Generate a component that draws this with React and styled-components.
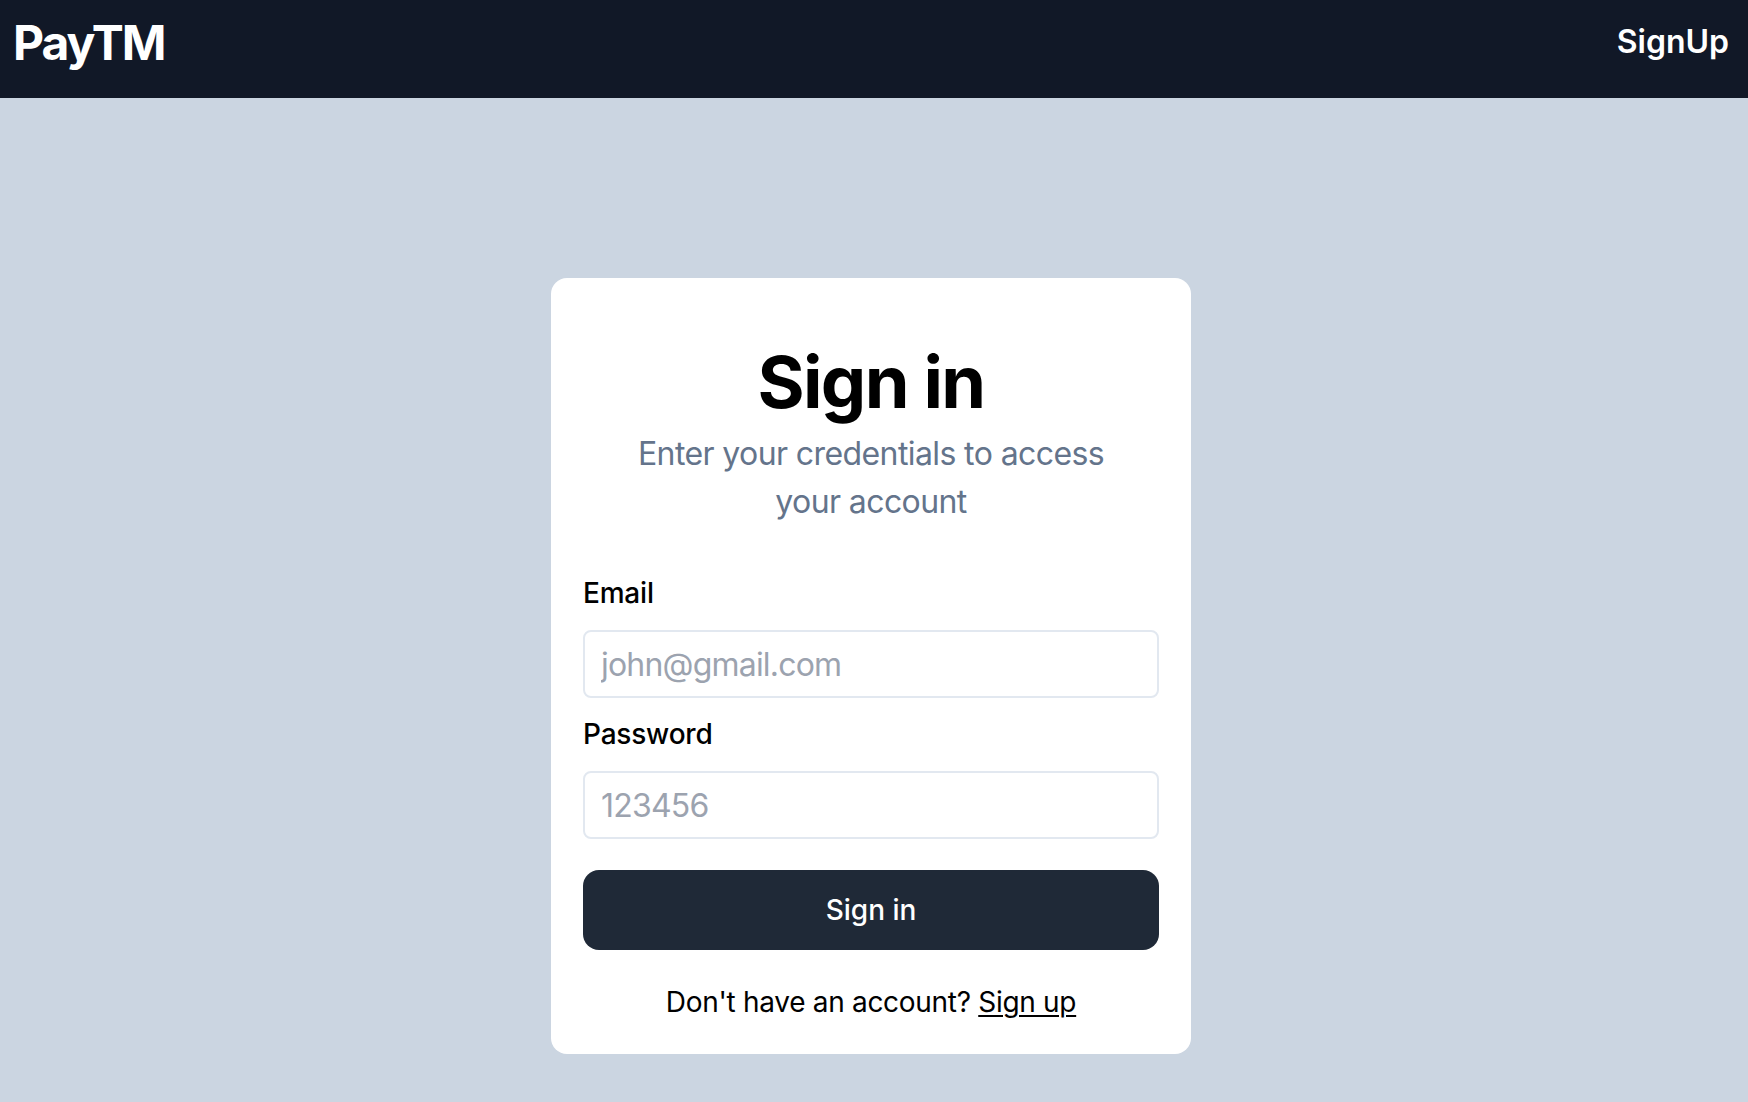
import React from "react";
import styled, { createGlobalStyle } from "styled-components";

const Global = createGlobalStyle`
  * { box-sizing: border-box; }
  html, body { margin: 0; padding: 0; }
  body {
    background: #cbd5e1;
    font-family: Inter, "Noto Sans", "Liberation Sans", sans-serif;
    min-height: 100vh;
  }
`;

const Nav = styled.header`
  height: 98px;
  background: #111827;
  display: flex;
  justify-content: space-between;
  align-items: flex-start;
  padding: 0 19px 0 13px;
  color: #ffffff;
`;

const Logo = styled.div`
  font-size: 48px;
  line-height: 48px;
  font-weight: 700;
  margin-top: 19px;
  letter-spacing: -2px;
`;

const NavLink = styled.a`
  font-size: 32px;
  line-height: 32px;
  font-weight: 600;
  margin-top: 26px;
  color: #ffffff;
  text-decoration: none;
  cursor: pointer;
`;

const Main = styled.main`
  display: flex;
  justify-content: center;
  padding-right: 6px;
`;

const Card = styled.div`
  width: 640px;
  margin-top: 180px;
  background: #ffffff;
  border-radius: 16px;
  padding: 64px 32px 32px;
  display: flex;
  flex-direction: column;
`;

const Heading = styled.h1`
  margin: 0;
  font-size: 72px;
  line-height: 80px;
  font-weight: 700;
  text-align: center;
  letter-spacing: -1.6px;
  color: #000000;
`;

const Subtitle = styled.p`
  margin: 8px 0 0;
  padding: 0 32px;
  font-size: 32px;
  line-height: 48px;
  letter-spacing: -0.6px;
  color: #64748b;
  text-align: center;
`;

const Field = styled.div`
  display: flex;
  flex-direction: column;
  gap: 17px;
  margin-top: ${(p) => p.$top}px;
`;

const Label = styled.label`
  font-size: 28px;
  line-height: 40px;
  font-weight: 500;
  letter-spacing: -0.2px;
  color: #000000;
`;

const Input = styled.input`
  width: 100%;
  height: 68px;
  border: 2px solid #e2e8f0;
  border-radius: 8px;
  padding: 0 16px;
  font-family: inherit;
  font-size: 32px;
  letter-spacing: -0.8px;
  color: #111827;
  outline: none;
  &::placeholder { color: #9ca3af; }
`;

const Button = styled.button`
  margin-top: 31px;
  height: 80px;
  width: 100%;
  border: none;
  border-radius: 16px;
  background: #1f2937;
  color: #ffffff;
  font-family: inherit;
  font-size: 28px;
  font-weight: 500;
  cursor: pointer;
`;

const Footer = styled.div`
  margin-top: 32px;
  font-size: 28px;
  line-height: 40px;
  letter-spacing: -0.3px;
  text-align: center;
  color: #000000;
`;

const FooterLink = styled.a`
  color: #000000;
  text-decoration: underline;
  text-decoration-thickness: 2px;
  text-underline-offset: 3px;
  cursor: pointer;
`;

export default function App() {
  return (
    <>
      <Global />
      <Nav>
        <Logo>PayTM</Logo>
        <NavLink>SignUp</NavLink>
      </Nav>
      <Main>
        <Card>
          <Heading>Sign in</Heading>
          <Subtitle>Enter your credentials to access your account</Subtitle>
          <Field $top={47}>
            <Label>Email</Label>
            <Input placeholder="john@gmail.com" />
          </Field>
          <Field $top={16}>
            <Label>Password</Label>
            <Input placeholder="123456" />
          </Field>
          <Button>Sign in</Button>
          <Footer>
            Don't have an account? <FooterLink>Sign up</FooterLink>
          </Footer>
        </Card>
      </Main>
    </>
  );
}
